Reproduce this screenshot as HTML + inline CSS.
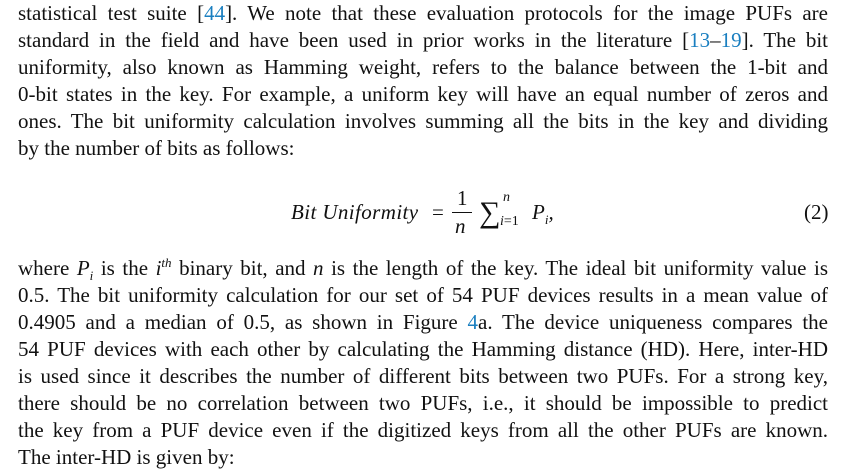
<!DOCTYPE html>
<html><head><meta charset="utf-8"><style>
body{margin:0;width:843px;height:476px;background:#fff;overflow:hidden;font-family:"Liberation Serif",serif;color:#111;}
.l{position:absolute;left:18px;width:810px;font-size:21px;line-height:27px;white-space:nowrap;text-align:justify;text-align-last:justify;}
.l.nj{text-align-last:left;}
a{color:#1a7fc0;text-decoration:none}
i{font-style:italic}
sup,sub{font-size:13px;line-height:0}
.eq{position:absolute;font-size:21px;font-style:italic;white-space:nowrap}
</style></head><body>
<div class="l" style="top:0px">statistical test suite [<a>44</a>]. We note that these evaluation protocols for the image PUFs are</div>
<div class="l" style="top:27px">standard in the field and have been used in prior works in the literature [<a>13</a>–<a>19</a>]. The bit</div>
<div class="l" style="top:54px">uniformity, also known as Hamming weight, refers to the balance between the 1-bit and</div>
<div class="l" style="top:81px">0-bit states in the key. For example, a uniform key will have an equal number of zeros and</div>
<div class="l" style="top:108px">ones. The bit uniformity calculation involves summing all the bits in the key and dividing</div>
<div class="l nj" style="top:135px">by the number of bits as follows:</div>

<div class="eq" style="left:291px;top:200px;letter-spacing:0.4px">Bit Uniformity</div>
<div class="eq" style="left:432px;top:200px;font-style:normal">=</div>
<div class="eq" style="left:457px;top:186px;font-style:normal">1</div>
<div style="position:absolute;left:452px;top:212px;width:20px;height:1px;background:#111"></div>
<div class="eq" style="left:455px;top:214px">n</div>
<div class="eq" style="left:479px;top:196px;font-style:normal;font-size:30px">∑</div>
<div class="eq" style="left:503px;top:190px;font-size:14px">n</div>
<div class="eq" style="left:500px;top:214px;font-size:14px"><i>i</i><span style="font-style:normal">=1</span></div>
<div class="eq" style="left:532px;top:200px">P<sub>i</sub>,</div>
<div class="eq" style="left:804px;top:200px;font-style:normal">(2)</div>

<div class="l" style="top:255px">where <i>P<sub>i</sub></i> is the <i>i<sup>th</sup></i> binary bit, and <i>n</i> is the length of the key. The ideal bit uniformity value is</div>
<div class="l" style="top:282px">0.5. The bit uniformity calculation for our set of 54 PUF devices results in a mean value of</div>
<div class="l" style="top:309px">0.4905 and a median of 0.5, as shown in Figure <a>4</a>a. The device uniqueness compares the</div>
<div class="l" style="top:336px">54 PUF devices with each other by calculating the Hamming distance (HD). Here, inter-HD</div>
<div class="l" style="top:363px">is used since it describes the number of different bits between two PUFs. For a strong key,</div>
<div class="l" style="top:390px">there should be no correlation between two PUFs, i.e., it should be impossible to predict</div>
<div class="l" style="top:417px">the key from a PUF device even if the digitized keys from all the other PUFs are known.</div>
<div class="l nj" style="top:444px">The inter-HD is given by:</div>
</body></html>
